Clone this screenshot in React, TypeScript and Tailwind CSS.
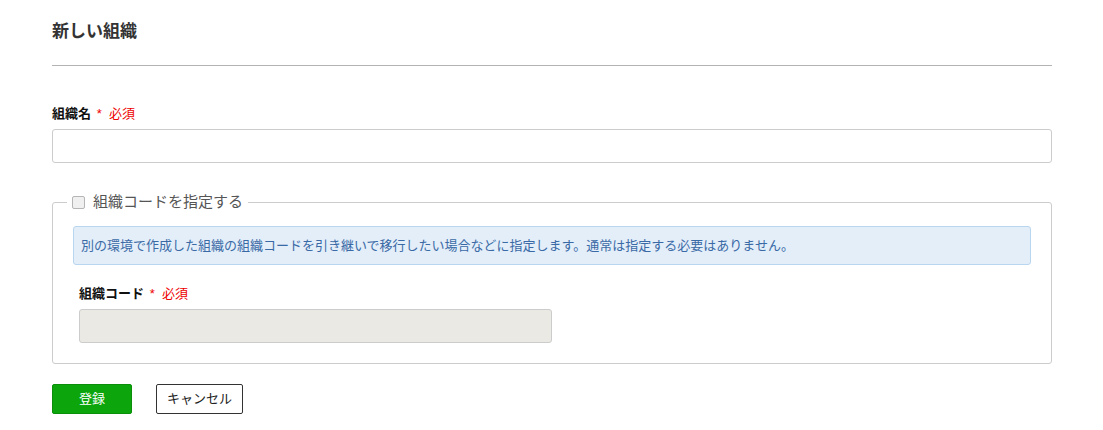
export default function App() {
	return (
		<div className="min-h-[430px] w-full bg-white text-[#333] [font-family:Arial,'Noto_Sans_CJK_JP',sans-serif]">
			<div className="w-[1000px] pl-[52px] pt-[20px] box-content">
				<h1 className="text-[17px] font-bold leading-[24px] text-[#333]">新しい組織</h1>
				<hr className="mt-[21px] border-0 border-t border-[#b3b3b3]" />

				<div className="mt-[39px]">
					<label className="block text-[13px] font-bold leading-[18px] text-[#111]">
						組織名 <span className="ml-[2px] font-normal text-[#e00]">*&nbsp;&nbsp;必須</span>
					</label>
					<input type="text" className="mt-[6px] block h-[34px] w-full rounded-[3px] border border-[#ccc] bg-white px-2 text-[13px] outline-none" />
				</div>

				<fieldset className="mt-[29px] rounded-[3px] border border-[#ccc] px-[20px] pb-[20px] pt-[14px]">
					<legend className="ml-[-6px] flex items-center gap-[8px] px-[5px] text-[15px] leading-[20px] text-[#555]">
						<span className="inline-block h-[13px] w-[13px] rounded-[2px] border border-[#b5b5b5] bg-[#f0f0f0]" />
						組織コードを指定する
					</legend>
					<div className="rounded-[3px] border border-[#b9d6f0] bg-[#e3eef9] px-[7px] py-[9px] text-[13px] leading-[19px] text-[#3a6aa6]">
						別の環境で作成した組織の組織コードを引き継いで移行したい場合などに指定します。通常は指定する必要はありません。
					</div>
					<div className="mt-[20px] pl-[6px]">
						<label className="block text-[13px] font-bold leading-[18px] text-[#111]">
							組織コード <span className="ml-[2px] font-normal text-[#e00]">*&nbsp;&nbsp;必須</span>
						</label>
						<input type="text" disabled className="mt-[6px] block h-[34px] w-[473px] rounded-[3px] border border-[#ccc] bg-[#ebe9e3]" />
					</div>
				</fieldset>

				<div className="mt-[20px] flex gap-[24px]">
					<button type="button" className="h-[30px] w-[80px] rounded-[2px] border border-[#0b8f0b] bg-[#0ca60c] text-[13px] text-white">
						登録
					</button>
					<button type="button" className="h-[30px] w-[87px] rounded-[2px] border border-[#333] bg-white text-[13px] text-[#222]">
						キャンセル
					</button>
				</div>
			</div>
		</div>
	);
}
